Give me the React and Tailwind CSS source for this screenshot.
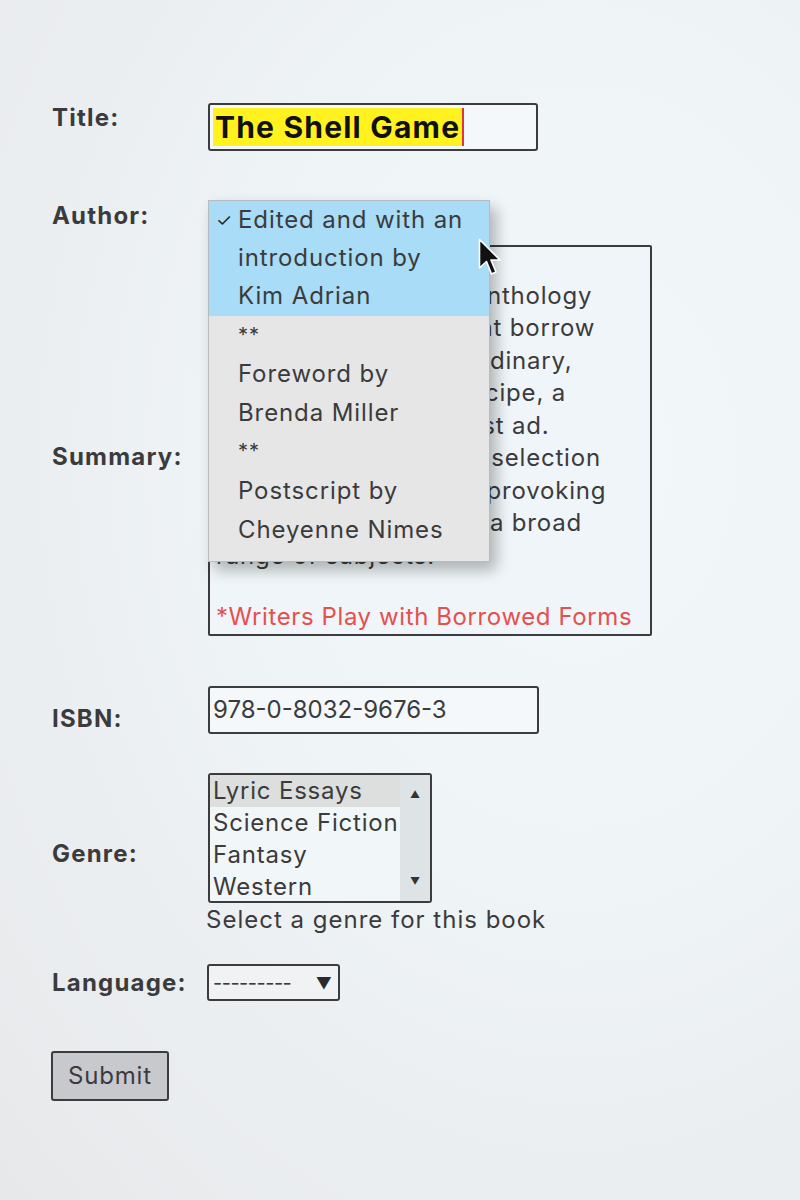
import React from 'react';

// ─── Date ─────────────────────────────────────────────────────────────────────
const FONT = { fontFamily: 'Inter, "DejaVu Sans", sans-serif' };

const summaryLines = [
  'The Shell Game is a',
  'truly first-of-its-kind anthology',
  'of inventive essays that borrow',
  'their forms from the ordinary,',
  'like a grocery list, a recipe, a',
  'an obituary or a contest ad.',
  'The book offers a rich selection',
  'of clever and thought-provoking',
  'essays which address a broad',
  'range of subjects.',
];

const genres = ['Lyric Essays', 'Science Fiction', 'Fantasy', 'Western'];

// ─── Cursor ───────────────────────────────────────────────────────────────────
function Cursor() {
  return (
    <svg width="24" height="40" viewBox="0 0 24 40" className="absolute left-[426px] top-[37px] z-20">
      <path
        d="M1.5 1.5 L1.5 30 L8.5 23.5 L13.5 36 L18 34 L13 22 L22 22 Z"
        fill="#111"
        stroke="#fff"
        strokeWidth="1.6"
        strokeLinejoin="round"
      />
    </svg>
  );
}

// ─── Meniu Author deschis ─────────────────────────────────────────────────────
function AuthorMenu() {
  return (
    <div className="absolute left-[156px] -top-[1px] z-10 w-[282px] bg-[#e6e6e6] border border-[#b9bcbf] shadow-[6px_8px_14px_rgba(0,0,0,0.28)] text-[24px] leading-[38px] tracking-[0.9px] text-[#3b3b3d]">
      <div className="relative bg-[#a9dcf6] pl-[29px] pb-[1px]">
        <span className="absolute left-[7px] top-[1px] text-[18px] text-[#222]">✓</span>
        <div>Edited and with an</div>
        <div>introduction by</div>
        <div>Kim Adrian</div>
      </div>
      <div className="pl-[29px] pb-[12px]">
        <div className="leading-[38px] text-[20px]">**</div>
        <div className="leading-[39px]">Foreword by</div>
        <div className="leading-[39px]">Brenda Miller</div>
        <div className="leading-[39px] text-[20px]">**</div>
        <div className="leading-[39px]">Postscript by</div>
        <div className="leading-[39px]">Cheyenne Nimes</div>
      </div>
    </div>
  );
}

// ─── Listă genuri ─────────────────────────────────────────────────────────────
function GenreList() {
  return (
    <div className="flex w-[224px] h-[130px] border-2 border-[#3c3c3e] rounded-[3px] bg-[#f1f6f9] overflow-hidden">
      <div className="flex-1 text-[24px] leading-[32px] tracking-[0.8px] text-[#3b3b3d]">
        {genres.map((g, i) => (
          <div key={g} className={i === 0 ? 'bg-[#dcdfdd] pl-[3px] whitespace-nowrap' : 'pl-[3px] whitespace-nowrap'}>
            {g}
          </div>
        ))}
      </div>
      <div className="w-[30px] bg-[#dee3e6] flex flex-col items-center justify-between py-[12px] text-[10px] text-[#333]">
        <span>▲</span>
        <span>▼</span>
      </div>
    </div>
  );
}

// ─── MAIN COMPONENT ───────────────────────────────────────────────────────────
export default function App() {
  return (
    <div
      style={FONT}
      className="min-h-[1200px] w-[800px] bg-[radial-gradient(ellipse_at_72%_38%,#f3f8fb_0%,#eef3f6_45%,#e7e8ea_100%)] pl-[52px] pt-[103px] text-[#3b3b3d]"
    >
      {/* Title */}
      <div className="flex items-start">
        <div className="w-[156px] pt-[1px] text-[24px] leading-[28px] font-bold tracking-[1.2px]">Title:</div>
        <div className="w-[330px] h-[48px] border-2 border-[#3c3c3e] rounded-[3px] bg-[#f4f8fa] flex items-center pl-[3px]">
          <span className="bg-[#fff21f] text-[#111] font-bold text-[30px] leading-[38px] px-[2px] tracking-[1.2px]">The Shell Game</span>
          <span className="w-[2px] h-[38px] bg-[#e0353a]" />
        </div>
      </div>

      {/* Author */}
      <div className="relative flex items-start mt-[50px] h-[30px]">
        <div className="w-[156px] pt-[1px] text-[24px] leading-[28px] font-bold tracking-[1.2px]">Author:</div>
        <AuthorMenu />
        <Cursor />
      </div>

      {/* Summary */}
      <div className="flex items-start mt-[14px]">
        <div className="w-[156px] pt-[198px] text-[24px] leading-[28px] font-bold tracking-[1.2px]">Summary:</div>
        <div className="w-[444px] h-[391px] border-2 border-[#3c3c3e] rounded-[2px] bg-[#eff5f8] pl-[6px] pt-[0px] text-[24px] leading-[32.5px] tracking-[0.8px] text-[#3b3b3d] whitespace-nowrap overflow-hidden">
          {summaryLines.map((l) => (
            <div key={l}>{l}</div>
          ))}
          <div className="h-[29px]" />
          <div className="text-[#e5504f] tracking-[0.6px]">*Writers Play with Borrowed Forms</div>
        </div>
      </div>

      {/* ISBN */}
      <div className="flex items-start mt-[50px]">
        <div className="w-[156px] pt-[19px] text-[24px] leading-[28px] font-bold tracking-[1.2px]">ISBN:</div>
        <div className="w-[331px] h-[48px] border-2 border-[#3c3c3e] rounded-[3px] bg-[#f4f8fa] flex items-center pl-[3px] text-[24px]">
          978-0-8032-9676-3
        </div>
      </div>

      {/* Genre */}
      <div className="flex items-start mt-[39px]">
        <div className="w-[156px] pt-[67px] text-[24px] leading-[28px] font-bold tracking-[1.2px]">Genre:</div>
        <GenreList />
      </div>
      <div className="ml-[154px] mt-[1px] text-[24px] leading-[32px] tracking-[1px]">Select a genre for this book</div>

      {/* Language */}
      <div className="flex items-center mt-[28px]">
        <div className="w-[155px] text-[24px] leading-[28px] font-bold tracking-[1.2px]">Language:</div>
        <div className="w-[133px] h-[37px] border-2 border-[#3c3c3e] rounded-[3px] bg-[#f0f2f4] flex items-center justify-between pl-[4px] pr-[6px]">
          <span className="text-[20px] tracking-[-0.5px]">---------</span>
          <span className="text-[16px] text-[#2a2a2c]">▼</span>
        </div>
      </div>

      {/* Submit */}
      <button className="mt-[50px] -ml-[1px] w-[118px] h-[50px] border-2 border-[#3c3c3e] rounded-[3px] bg-[#c8c9cc] text-[24px] tracking-[0.8px] text-[#3b3b3d]">
        Submit
      </button>
    </div>
  );
}
